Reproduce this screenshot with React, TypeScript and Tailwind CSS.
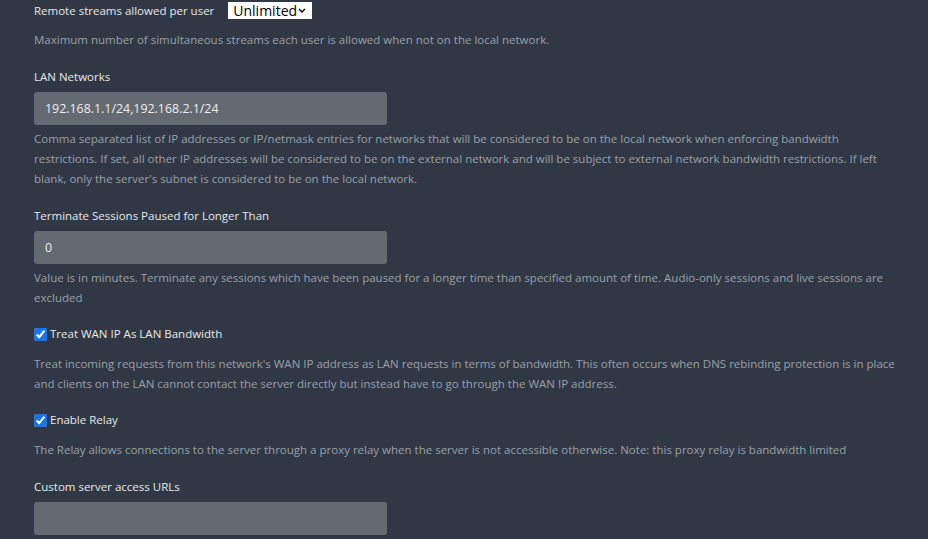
import React, { useState } from 'react';

const labelCls = 'block text-[11.5px] leading-5 text-[#e8e8e8]';
const helpCls = 'mt-[4px] text-[11.5px] leading-5 text-[#9aa0a8]';
const inputCls =
  'mt-[5px] block h-[33px] w-[353px] rounded-[3px] bg-[#646a72] px-[11px] text-[12.4px] text-[#eeeeee] outline-none';

const TextSetting: React.FC<{ label: string; value: string; help?: string }> = ({ label, value, help }) => {
  const [val, setVal] = useState(value);
  return (
    <div className="mt-[17px]">
      <label className={labelCls}>{label}</label>
      <input type="text" value={val} onChange={(e) => setVal(e.target.value)} className={inputCls} />
      {help && <p className={helpCls}>{help}</p>}
    </div>
  );
};

const CheckSetting: React.FC<{ label: string; help: string }> = ({ label, help }) => {
  const [checked, setChecked] = useState(true);
  return (
    <div className="mt-[16px]">
      <label className="flex items-center text-[11.5px] leading-5 text-[#e8e8e8]">
        <input
          type="checkbox"
          checked={checked}
          onChange={(e) => setChecked(e.target.checked)}
          className="m-0 mr-[3px] h-[13px] w-[13px] accent-[#1a73e8]"
        />
        {label}
      </label>
      <p className="mt-[10px] text-[11.5px] leading-5 text-[#9aa0a8]">{help}</p>
    </div>
  );
};

export default function App() {
  return (
    <div
      className="min-h-[539px] w-full overflow-hidden bg-[#303845] pl-[34px] pr-[28px]"
      style={{ fontFamily: '"Open Sans", "Noto Sans", sans-serif' }}
    >
      <div className="flex h-[21px] items-center text-[11.5px] text-[#e8e8e8]">
        <span>Remote streams allowed per user</span>
        <div className="relative ml-[14px] h-[17px] w-[84px]">
          <select className="h-[17px] w-[84px] appearance-none bg-white pl-[5px] text-[14px] leading-[17px] text-black outline-none">
            <option>Unlimited</option>
          </select>
          <svg
            className="pointer-events-none absolute right-[6px] top-[6px]"
            width="8"
            height="5"
            viewBox="0 0 8 5"
            fill="none"
          >
            <path d="M1 1l3 3 3-3" stroke="#000" strokeWidth="1.4" />
          </svg>
        </div>
      </div>
      <p className="mt-[9px] text-[11.5px] leading-5 text-[#9aa0a8]">
        Maximum number of simultaneous streams each user is allowed when not on the local network.
      </p>

      <TextSetting
        label="LAN Networks"
        value="192.168.1.1/24,192.168.2.1/24"
        help="Comma separated list of IP addresses or IP/netmask entries for networks that will be considered to be on the local network when enforcing bandwidth restrictions. If set, all other IP addresses will be considered to be on the external network and will be subject to external network bandwidth restrictions. If left blank, only the server's subnet is considered to be on the local network."
      />
      <TextSetting
        label="Terminate Sessions Paused for Longer Than"
        value="0"
        help="Value is in minutes. Terminate any sessions which have been paused for a longer time than specified amount of time. Audio-only sessions and live sessions are excluded"
      />
      <CheckSetting
        label="Treat WAN IP As LAN Bandwidth"
        help="Treat incoming requests from this network's WAN IP address as LAN requests in terms of bandwidth. This often occurs when DNS rebinding protection is in place and clients on the LAN cannot contact the server directly but instead have to go through the WAN IP address."
      />
      <CheckSetting
        label="Enable Relay"
        help="The Relay allows connections to the server through a proxy relay when the server is not accessible otherwise. Note: this proxy relay is bandwidth limited"
      />
      <TextSetting label="Custom server access URLs" value="" />
    </div>
  );
}
